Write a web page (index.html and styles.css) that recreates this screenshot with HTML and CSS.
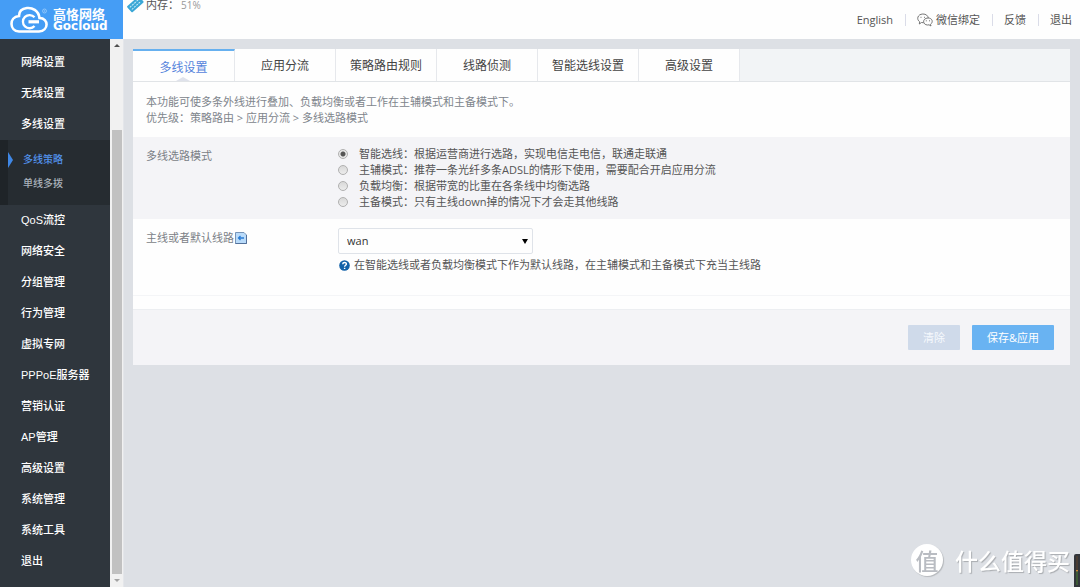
FILE: index.html
```
<!DOCTYPE html>
<html lang="zh-CN">
<head>
<meta charset="utf-8">
<title>多线设置</title>
<link rel="stylesheet" href="styles.css">
</head>
<body>
<header class="topbar">
  <a class="logo" href="#">
    <svg class="logo-cloud" viewBox="0 0 40 28" width="40" height="28" fill="none" stroke="#fff" aria-hidden="true">
      <path d="M10 25.500H30C40 25 40 12 30.500 12C29.500 4 23 1.500 18 2C12.500 2.500 10 6 10 10C-.5 11 .5 25 10 25.500Z" stroke-width="2.600"/>
      <path d="M25.500 11.300A6.600 6.600 0 1 0 25.500 20" stroke-width="2.300"/>
      <path d="M19.500 15.800H30" stroke-width="3.200"/>
      <circle cx="35.500" cy="5" r="2" stroke-width=".6" opacity=".6"/>
      <circle cx="35.500" cy="5" r=".6" stroke-width=".4" opacity=".6"/>
    </svg>
    <span class="logo-text"><span class="logo-cn">高恪网络</span><span class="logo-en">Gocloud</span></span>
  </a>
  <div class="status">
    <svg width="17" height="17" viewBox="0 0 17 17" aria-hidden="true">
      <g transform="rotate(-42 8 8)"><rect x="0" y="4.500" width="16" height="8" rx="1" fill="#3ba7d6"/><path d="M2 7H14M2 10H14" stroke="#c9edfa" stroke-dasharray="2 1"/></g>
    </svg>
    <span>内存：</span><span class="status-value">51%</span>
  </div>
  <nav class="toplinks">
    <a href="#">English</a>
    <a href="#"><svg width="16" height="14" viewBox="0 0 16 14" fill="none" stroke="#666" stroke-width=".9" aria-hidden="true">
      <path d="M6.300 9.700 4.500 9.500 2.300 11 2.700 8.800C-.8 6.500.5 1.200 5.800 1C9 .9 11 2.800 11.300 5"/>
      <path d="M13.500 11.300C16.500 9.200 15.500 5 11 5C5.500 5 5 11.700 10.500 12L12 11.800 14 13Z"/>
      <path d="M4 3.800V4.800M7.500 3.800V4.800M9.300 7.300V8.300M12.500 7.300V8.300"/>
    </svg>微信绑定</a>
    <a href="#">反馈</a>
    <a href="#">退出</a>
  </nav>
</header>
<div class="body">
  <nav class="sidebar">
    <ul class="menu">
      <li><a href="#">网络设置</a></li>
      <li><a href="#">无线设置</a></li>
      <li><a href="#">多线设置</a>
        <ul class="submenu">
          <li><a class="current" href="#">多线策略</a></li>
          <li><a href="#">单线多拨</a></li>
        </ul>
      </li>
      <li><a href="#">QoS流控</a></li>
      <li><a href="#">网络安全</a></li>
      <li><a href="#">分组管理</a></li>
      <li><a href="#">行为管理</a></li>
      <li><a href="#">虚拟专网</a></li>
      <li><a href="#">PPPoE服务器</a></li>
      <li><a href="#">营销认证</a></li>
      <li><a href="#">AP管理</a></li>
      <li><a href="#">高级设置</a></li>
      <li><a href="#">系统管理</a></li>
      <li><a href="#">系统工具</a></li>
      <li><a href="#">退出</a></li>
    </ul>
  </nav>
  <div class="scrollbar" aria-hidden="true">
    <svg width="6" height="3" viewBox="0 0 6 3"><path d="M0 3 3 0 6 3Z" fill="#505050"/></svg>
    <div class="scroll-track"><div class="scroll-thumb"></div></div>
    <svg width="6" height="3" viewBox="0 0 6 3"><path d="M0 0 3 3 6 0Z" fill="#a3a3a3"/></svg>
  </div>
  <main class="content">
    <form class="card">
      <nav class="tabs">
        <a class="tab active" href="#">多线设置</a>
        <a class="tab" href="#">应用分流</a>
        <a class="tab" href="#">策略路由规则</a>
        <a class="tab" href="#">线路侦测</a>
        <a class="tab" href="#">智能选线设置</a>
        <a class="tab" href="#">高级设置</a>
      </nav>
      <p class="intro">本功能可使多条外线进行叠加、负载均衡或者工作在主辅模式和主备模式下。<br>优先级：策略路由 &gt; 应用分流 &gt; 多线选路模式</p>
      <div class="row shaded" role="radiogroup" aria-labelledby="mode-label">
        <span class="row-label" id="mode-label">多线选路模式</span>
        <div class="row-field">
          <label class="option"><input type="radio" name="mode" checked>智能选线：根据运营商进行选路，实现电信走电信，联通走联通</label>
          <label class="option"><input type="radio" name="mode">主辅模式：推荐一条光纤多条ADSL的情形下使用，需要配合开启应用分流</label>
          <label class="option"><input type="radio" name="mode">负载均衡：根据带宽的比重在各条线中均衡选路</label>
          <label class="option"><input type="radio" name="mode">主备模式：只有主线down掉的情况下才会走其他线路</label>
        </div>
      </div>
      <div class="row row-last">
        <label class="row-label" for="line">主线或者默认线路<svg width="12" height="12" viewBox="0 0 12 12" aria-hidden="true">
          <path d="M.5.5H9L11.500 3V11.500H.5Z" fill="#b9dbfa" stroke="#7694b8"/><path d="M.5 11.500H11.500V3" fill="none" stroke="#53719b"/><path d="M9 6H4M5.500 4 3.500 6 5.500 8" fill="none" stroke="#287bd4" stroke-width="1.300"/>
        </svg></label>
        <div class="row-field">
          <div class="select">
            <select id="line"><option>wan</option></select>
            <svg width="6" height="5" viewBox="0 0 6 5" aria-hidden="true"><path d="M0 0H6L3 5Z" fill="#000"/></svg>
          </div>
          <div class="hint">
            <svg width="11" height="11" viewBox="0 0 11 11" aria-hidden="true"><circle cx="5.500" cy="5.500" r="5.300" fill="#1261a8"/><path d="M3.700 4.200C3.800 1.900 7.400 1.900 7.400 4.100C7.400 5.300 5.600 5.300 5.600 6.800M5.600 7.700V9" fill="none" stroke="#fff" stroke-width="1.400"/></svg>
            <span>在智能选线或者负载均衡模式下作为默认线路，在主辅模式和主备模式下充当主线路</span>
          </div>
        </div>
      </div>
      <div class="actions">
        <button class="btn btn-muted" type="reset">清除</button>
        <button class="btn" type="submit">保存&amp;应用</button>
      </div>
    </form>
  </main>
</div>
<div class="watermark"><span class="watermark-badge">值</span><span>什么值得买</span></div>
<div class="meter" aria-hidden="true"></div>
</body>
</html>
```
FILE: styles.css
```
* { box-sizing: border-box; }
body {
  margin: 0;
  min-height: 100vh;
  display: flex;
  flex-direction: column;
  background: #dde0e5;
  color: #555;
  font: 11px/16px "Open Sans", "Noto Sans CJK SC", sans-serif;
}
a { color: inherit; text-decoration: none; }
ul { list-style: none; margin: 0; padding: 0; }
svg { flex: none; }

.topbar { display: flex; height: 39px; background: #fefefe; }
.logo {
  display: flex;
  align-items: center;
  gap: 4px;
  width: 123px;
  padding-left: 9px;
  background: #459df5;
  color: #fff;
}
.logo-text { display: flex; flex-direction: column; }
.logo-cn { font: 700 13px/13px "Noto Sans CJK SC", sans-serif; }
.logo-en { font: 700 12px/12px "DejaVu Sans", sans-serif; }
.status {
  display: flex;
  align-items: center;
  height: 17px;
  margin: -4px auto 0 4px;
  gap: 2px;
}
.status-value { color: #999; font-size: 10px; }
.toplinks { display: flex; align-items: center; padding-right: 8px; }
.toplinks a { display: flex; align-items: center; gap: 3px; }
.toplinks a + a::before {
  content: "";
  width: 1px;
  height: 12px;
  margin: 0 8px 0 12px;
  background: #dadce8;
}

.body { display: flex; flex: 1; }
.sidebar {
  width: 110px;
  padding-top: 8px;
  background: #2f363d;
  color: #fff;
  font-family: "Liberation Sans", "Noto Sans CJK SC", sans-serif;
  font-weight: 500;
}
.menu > li > a { display: block; padding-left: 21px; line-height: 31px; }
.submenu {
  padding: 8px 0 9px;
  border-left: 8px solid #1f2428;
  background: #262c31;
  color: #a9b1ba;
  font-size: 10px;
}
.submenu a { display: flex; align-items: center; height: 24px; padding-left: 15px; }
.submenu .current { padding-left: 0; gap: 10px; color: #5291ea; }
.submenu .current::before {
  content: "";
  border: solid transparent;
  border-width: 8px 0 8px 5px;
  border-left-color: #3f87e5;
}
.scrollbar {
  display: flex;
  flex-direction: column;
  align-items: center;
  gap: 5px;
  width: 14px;
  padding: 5px 0;
  border-right: 1px solid #e4e6ea;
  background: #f1f1f1;
}
.scroll-track { flex: 1; width: 10px; display: flex; flex-direction: column; justify-content: flex-end; }
.scroll-thumb { height: 85%; background: #c1c1c1; }

.content { flex: 1; padding: 10px 10px 0 9px; }
.card { background: #fefefe; }
.tabs {
  display: flex;
  height: 33px;
  border-bottom: 1px solid #e1e4e7;
  background: #f2f4f6;
}
.tab {
  position: relative;
  width: 101px;
  border-right: 1px solid #e6e8ec;
  background: #fefefe;
  color: #444;
  font-size: 12px;
  line-height: 33px;
  text-align: center;
}
.active {
  width: 102px;
  border-top: 2px solid #66b0ef;
  color: #5583dc;
}
.active::after {
  content: "";
  position: absolute;
  left: 43px;
  bottom: 0;
  border: solid transparent;
  border-width: 0 7px 4px;
  border-bottom-color: #dfe2eb;
}
.intro { margin: 0; padding: 12px 12px 11px 13px; color: #80858c; }
.row { display: grid; grid-template-columns: 192px 1fr; padding: 9px 12px 9px 13px; }
.row-last {
  margin-bottom: 13px;
  padding-bottom: 22px;
  border-bottom: 1px solid #f4f5f7;
}
.shaded { background: #f4f4f7; }
.row-label { display: flex; align-items: center; gap: 1px; height: 20px; color: #7b7f86; }
.option { display: flex; align-items: center; }
.option input {
  appearance: none;
  width: 10px;
  height: 10px;
  margin: 0 11px 0 0;
  border: 1px solid #b0b0b0;
  border-radius: 50%;
  background: linear-gradient(#d8d8d8, #ececec);
}
.option input:checked { background: radial-gradient(circle, #555 2px, #e8e8e8 3px); }
.select { display: grid; width: 195px; align-items: center; }
.select select, .select svg { grid-area: 1 / 1; }
.select svg { justify-self: end; margin-right: 5px; pointer-events: none; }
.select select {
  appearance: none;
  height: 26px;
  padding: 0 8px;
  border: 1px solid #dfe3e9;
  border-radius: 2px;
  background: #fefefe;
  color: #333;
  font: inherit;
}
.hint { display: flex; align-items: center; gap: 4px; padding: 3px 0 0 1px; }
.actions {
  display: flex;
  justify-content: flex-end;
  gap: 12px;
  padding: 15px 16px;
  border-top: 1px solid #eceef1;
  background: #f4f4f7;
}
.btn {
  height: 25px;
  padding: 0 15px;
  border: 0;
  border-radius: 1px;
  background: #69b3f2;
  color: #fff;
  font: inherit;
}
.btn-muted { background: #cfdaea; color: #f6f9fd; }

.watermark {
  position: fixed;
  right: 10px;
  bottom: 11px;
  display: flex;
  align-items: center;
  gap: 12px;
  color: #fff;
  font: 500 23px/32px "Noto Sans CJK SC", sans-serif;
  text-shadow: 1px 1px 1px #a9acb0;
}
.watermark-badge {
  width: 32px;
  border-radius: 50%;
  background: #fff;
  box-shadow: 1px 1px 1px #b5b8bc;
  color: #b9bcc2;
  text-align: center;
  text-shadow: none;
}
.meter {
  position: fixed;
  right: 0;
  bottom: 0;
  width: 6px;
  height: 33px;
  padding: 2px;
  border-radius: 2px 0 0 0;
  background: linear-gradient(#4a3d34 50%, #c98434 50%, #3d5a35 55%) content-box, #33363b;
}
```
